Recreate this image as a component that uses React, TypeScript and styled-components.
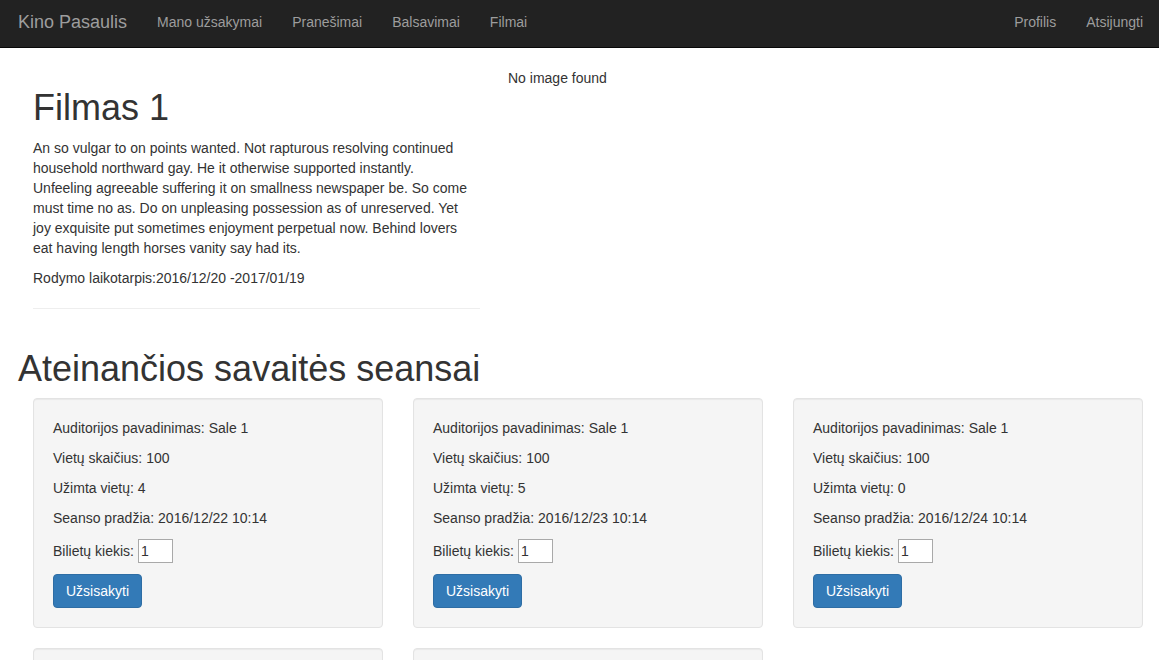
import styled, { createGlobalStyle } from 'styled-components';

const GlobalStyle = createGlobalStyle`
  * {
    box-sizing: border-box;
  }

  body {
    margin: 0;
    background: #fff;
    color: #333;
    font-family: 'Liberation Sans', Arial, Helvetica, sans-serif;
    font-size: 14px;
    line-height: 20px;
  }
`;

const sessions = [
  { hall: 'Sale 1', seats: 100, taken: 4, start: '2016/12/22 10:14' },
  { hall: 'Sale 1', seats: 100, taken: 5, start: '2016/12/23 10:14' },
  { hall: 'Sale 1', seats: 100, taken: 0, start: '2016/12/24 10:14' },
  { hall: 'Sale 1', seats: 100, taken: 0, start: '2016/12/25 10:14' },
  { hall: 'Sale 1', seats: 100, taken: 0, start: '2016/12/26 10:14' },
];

function App() {
  return (
    <>
      <GlobalStyle />
      <Navbar>
        <NavGroup>
          <Brand href="#">Kino Pasaulis</Brand>
          <NavLink href="#">Mano užsakymai</NavLink>
          <NavLink href="#">Pranešimai</NavLink>
          <NavLink href="#">Balsavimai</NavLink>
          <NavLink href="#">Filmai</NavLink>
        </NavGroup>
        <NavGroup>
          <NavLink href="#">Profilis</NavLink>
          <NavLink href="#">Atsijungti</NavLink>
        </NavGroup>
      </Navbar>

      <Container>
        <FilmRow>
          <FilmInfo>
            <Title>Filmas 1</Title>
            <Description>
              An so vulgar to on points wanted. Not rapturous resolving continued household
              northward gay. He it otherwise supported instantly. Unfeeling agreeable suffering it
              on smallness newspaper be. So come must time no as. Do on unpleasing possession as of
              unreserved. Yet joy exquisite put sometimes enjoyment perpetual now. Behind lovers eat
              having length horses vanity say had its.
            </Description>
            <Text>Rodymo laikotarpis:2016/12/20 -2017/01/19</Text>
            <Divider />
          </FilmInfo>
          <Poster>No image found</Poster>
        </FilmRow>

        <SectionTitle>Ateinančios savaitės seansai</SectionTitle>

        <CardGrid>
          {sessions.map((s, i) => (
            <Well key={i}>
              <Text>Auditorijos pavadinimas: {s.hall}</Text>
              <Text>Vietų skaičius: {s.seats}</Text>
              <Text>Užimta vietų: {s.taken}</Text>
              <Text>Seanso pradžia: {s.start}</Text>
              <QtyRow>
                Bilietų kiekis:
                <QtyInput type="number" defaultValue={1} />
              </QtyRow>
              <OrderButton type="button">Užsisakyti</OrderButton>
            </Well>
          ))}
        </CardGrid>
      </Container>
    </>
  );
}

const Navbar = styled.nav`
  display: flex;
  justify-content: space-between;
  align-items: center;
  height: 48px;
  padding: 0 1px 3px 3px;
  background: #222;
  border-bottom: 1px solid #080808;
`;

const NavGroup = styled.div`
  display: flex;
  align-items: center;
`;

const Brand = styled.a`
  padding: 0 15px;
  font-size: 18px;
  line-height: 20px;
  color: #9d9d9d;
  text-decoration: none;
`;

const NavLink = styled.a`
  padding: 0 15px;
  font-size: 14px;
  line-height: 20px;
  color: #9d9d9d;
  text-decoration: none;
`;

const Container = styled.main`
  padding: 20px 16px 0 18px;
`;

const FilmRow = styled.div`
  display: grid;
  grid-template-columns: 447px 1fr;
  column-gap: 28px;
  padding: 0 15px;
`;

const FilmInfo = styled.div`
  display: flow-root;
`;

const Title = styled.h1`
  margin: 20px 0 10px;
  font-size: 36px;
  font-weight: 500;
  line-height: 1.1;
`;

const Text = styled.p`
  margin: 0 0 10px;
`;

const Description = styled(Text)`
  max-width: 440px;
`;

const Divider = styled.hr`
  margin: 20px 0;
  border: 0;
  border-top: 1px solid #eee;
`;

const Poster = styled.div`
  line-height: 20px;
`;

const SectionTitle = styled.h1`
  margin: 20px 0 10px;
  font-size: 36px;
  font-weight: 500;
  line-height: 1.1;
`;

const CardGrid = styled.div`
  display: grid;
  grid-template-columns: repeat(3, 350px);
  column-gap: 30px;
  row-gap: 20px;
  padding-left: 15px;
`;

const Well = styled.div`
  padding: 19px;
  background: #f5f5f5;
  border: 1px solid #e3e3e3;
  border-radius: 4px;
  box-shadow: inset 0 1px 1px rgba(0, 0, 0, 0.05);
`;

const QtyRow = styled.div`
  display: flex;
  align-items: center;
  gap: 4px;
  height: 26px;
  margin-bottom: 10px;
`;

const QtyInput = styled.input`
  width: 35px;
  height: 24px;
  padding: 1px 2px;
  border: 1px solid #a9a9a9;
  background: #fff;
  color: #333;
  font-family: inherit;
  font-size: 14px;
  appearance: textfield;
  -moz-appearance: textfield;

  &::-webkit-inner-spin-button,
  &::-webkit-outer-spin-button {
    -webkit-appearance: none;
    margin: 0;
  }
`;

const OrderButton = styled.button`
  display: block;
  padding: 6px 12px;
  font-family: inherit;
  font-size: 14px;
  line-height: 20px;
  color: #fff;
  background: #337ab7;
  border: 1px solid #2e6da4;
  border-radius: 4px;
  cursor: pointer;
`;

export default App;
